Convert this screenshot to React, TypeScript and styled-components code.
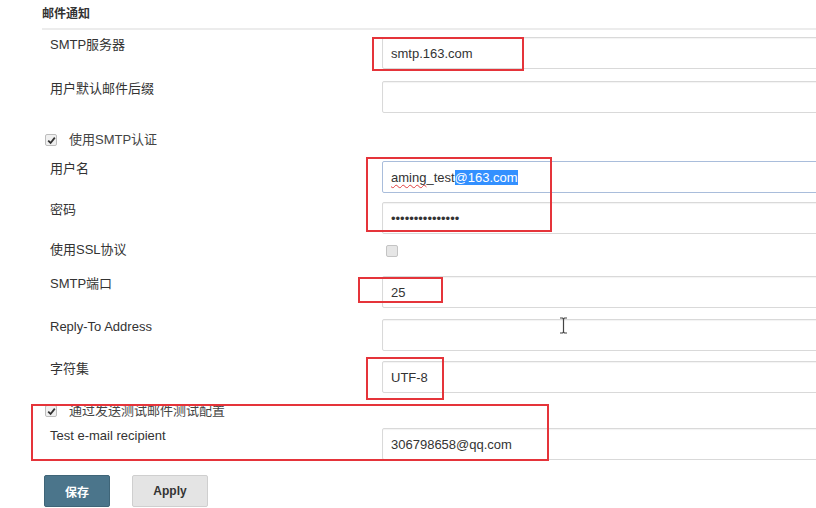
import styled, { createGlobalStyle } from "styled-components";

const GlobalStyle = createGlobalStyle`
  *, *::before, *::after {
    box-sizing: border-box;
  }
  html, body {
    margin: 0;
    padding: 0;
    background: #fff;
    overflow: hidden;
  }
  body {
    font-family: "Liberation Sans", Arial, "Noto Sans CJK SC", sans-serif;
    font-size: 13px;
    color: #333;
  }
`;

type RowProps = { $h: number; $pt?: number };

const Page = styled.div`
  position: relative;
  width: 816px;
  height: 508px;
  overflow: hidden;
  padding-left: 42px;
`;

const SectionHeader = styled.div`
  height: 30px;
  line-height: 28px;
  font-weight: bold;
  font-size: 12px;
  color: #333;
  border-bottom: 2px solid #ececec;
  width: 900px;
`;

const Form = styled.div`
  padding-top: 7px;
  display: flex;
  flex-direction: column;
`;

const FieldRow = styled.div<RowProps>`
  display: grid;
  grid-template-columns: 332px 500px;
  padding-left: 8px;
  padding-top: ${(p) => p.$pt ?? 0}px;
  height: ${(p) => p.$h}px;
  align-items: start;
`;

const Label = styled.div`
  line-height: 16px;
  color: #333;
  white-space: nowrap;
`;

const TextInput = styled.input`
  width: 100%;
  height: 32px;
  padding: 0 8px;
  border: 1px solid #d9d9d9;
  border-radius: 2px;
  box-shadow: inset 0 1px 1px rgba(0, 0, 0, 0.05);
  font-family: "Liberation Sans", Arial, sans-serif;
  font-size: 13px;
  color: #333;
  background: #fff;
  outline: none;
  margin: 0;
`;

const FocusedInput = styled.div`
  width: 100%;
  height: 32px;
  padding: 0 8px;
  border: 1px solid #a9bddb;
  border-radius: 2px;
  display: flex;
  align-items: center;
  font-size: 13px;
  color: #333;
  white-space: pre;
`;

const Misspelled = styled.span`
  text-decoration: underline wavy #e04040;
  text-decoration-skip-ink: none;
  text-underline-offset: 2px;
  text-decoration-thickness: 1px;
`;

const Selected = styled.span`
  background: #3390ff;
  color: #fff;
`;

const CheckRow = styled.div<RowProps>`
  display: flex;
  align-items: flex-start;
  gap: 12px;
  padding-left: 3px;
  padding-top: ${(p) => p.$pt ?? 0}px;
  height: ${(p) => p.$h}px;
  line-height: 16px;
  color: #444;
`;

const Box = styled.span<{ $checked?: boolean }>`
  width: 12px;
  height: 12px;
  margin-top: 2px;
  border: 1px solid ${(p) => (p.$checked ? "#bdbdbd" : "#c4c4c4")};
  border-radius: 2px;
  background: ${(p) => (p.$checked ? "#f0f0f0" : "#e6e6e6")};
  display: inline-flex;
  align-items: center;
  justify-content: center;
  flex: none;
`;

const BoxCell = styled.div`
  padding-left: 4px;
  padding-top: 1px;
`;

const Buttons = styled.div`
  display: flex;
  gap: 22px;
  padding-left: 2px;
  margin-top: 8px;
`;

const Button = styled.button<{ $primary?: boolean }>`
  height: 32px;
  width: ${(p) => (p.$primary ? 66 : 76)}px;
  border-radius: 2px;
  font-family: "Liberation Sans", Arial, "Noto Sans CJK SC", sans-serif;
  font-size: 12px;
  font-weight: bold;
  border: 1px solid ${(p) => (p.$primary ? "#3f6578" : "#cfcfcf")};
  background: ${(p) => (p.$primary ? "#4b758b" : "#e4e4e4")};
  color: ${(p) => (p.$primary ? "#fff" : "#333")};
  padding: 0;
`;

const Annotation = styled.div<{ $x: number; $y: number; $w: number; $hh: number }>`
  position: absolute;
  left: ${(p) => p.$x}px;
  top: ${(p) => p.$y}px;
  width: ${(p) => p.$w}px;
  height: ${(p) => p.$hh}px;
  border: 2px solid #e5343a;
  pointer-events: none;
`;

const Cursor = styled.svg`
  position: absolute;
  left: 559px;
  top: 317px;
`;

const Check = () => (
  <svg width="9" height="9" viewBox="0 0 9 9">
    <path d="M1.2 4.6 L3.6 7 L7.8 1.6" fill="none" stroke="#333" strokeWidth="1.8" />
  </svg>
);

const annotations = [
  { x: 372, y: 37, w: 152, h: 34 },
  { x: 366, y: 157, w: 186, h: 75 },
  { x: 358, y: 277, w: 85, h: 26 },
  { x: 366, y: 357, w: 78, h: 43 },
  { x: 31, y: 404, w: 518, h: 57 },
];

export default function App() {
  return (
    <>
      <GlobalStyle />
      <Page>
        <SectionHeader>邮件通知</SectionHeader>
        <Form>
          <FieldRow $h={44}>
            <Label>SMTP服务器</Label>
            <TextInput defaultValue="smtp.163.com" />
          </FieldRow>
          <FieldRow $h={46}>
            <Label>用户默认邮件后缀</Label>
            <TextInput defaultValue="" />
          </FieldRow>
          <CheckRow $h={34} $pt={5}>
            <Box $checked>
              <Check />
            </Box>
            <span>使用SMTP认证</span>
          </CheckRow>
          <FieldRow $h={41}>
            <Label>用户名</Label>
            <FocusedInput>
              <Misspelled>aming</Misspelled>_test<Selected>@163.com</Selected>
            </FocusedInput>
          </FieldRow>
          <FieldRow $h={38}>
            <Label>密码</Label>
            <TextInput type="password" defaultValue="aming123456test" />
          </FieldRow>
          <FieldRow $h={36} $pt={2}>
            <Label>使用SSL协议</Label>
            <BoxCell>
              <Box />
            </BoxCell>
          </FieldRow>
          <FieldRow $h={43}>
            <Label>SMTP端口</Label>
            <TextInput defaultValue="25" />
          </FieldRow>
          <FieldRow $h={42}>
            <Label>Reply-To Address</Label>
            <TextInput defaultValue="" />
          </FieldRow>
          <FieldRow $h={41}>
            <Label>字符集</Label>
            <TextInput defaultValue="UTF-8" />
          </FieldRow>
          <CheckRow $h={26} $pt={1}>
            <Box $checked>
              <Check />
            </Box>
            <span>通过发送测试邮件测试配置</span>
          </CheckRow>
          <FieldRow $h={39}>
            <Label>Test e-mail recipient</Label>
            <TextInput defaultValue="306798658@qq.com" />
          </FieldRow>
          <Buttons>
            <Button $primary>保存</Button>
            <Button>Apply</Button>
          </Buttons>
        </Form>
        {annotations.map((a, i) => (
          <Annotation key={i} $x={a.x} $y={a.y} $w={a.w} $hh={a.h} />
        ))}
        <Cursor width="9" height="17" viewBox="0 0 9 17">
          <path
            d="M1 1 H3.5 Q4.5 1.5 4.5 2.5 V14.5 Q4.5 15.5 3.5 16 H1 M8 1 H5.5 Q4.5 1.5 4.5 2.5 M4.5 14.5 Q4.5 15.5 5.5 16 H8"
            fill="none"
            stroke="#444"
            strokeWidth="1.2"
          />
        </Cursor>
      </Page>
    </>
  );
}
